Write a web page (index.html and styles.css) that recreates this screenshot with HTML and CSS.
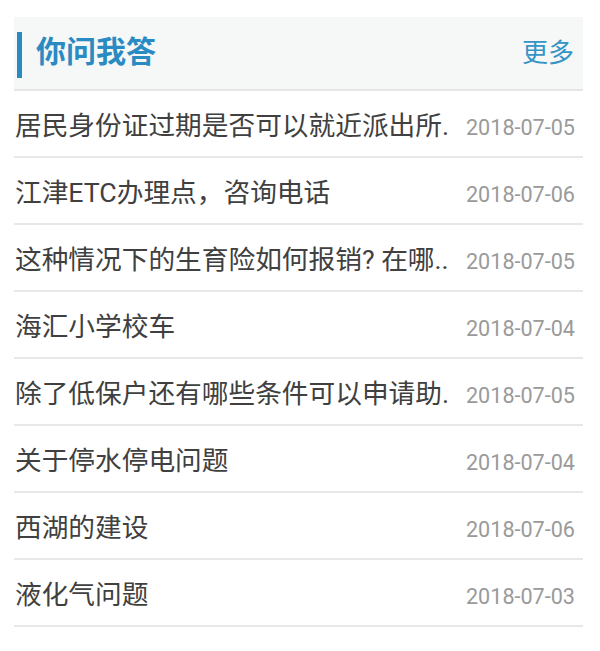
FILE: index.html
```html
<!DOCTYPE html>
<html lang="zh-CN">
<head>
<meta charset="utf-8">
<title>你问我答</title>
<link rel="stylesheet" href="styles.css">
</head>
<body>
<section class="panel">
  <header class="panel-head">
    <h2 class="panel-title"><span class="title-text">你问我答</span></h2>
    <a class="more" href="#">更多</a>
  </header>
  <ul class="list">
    <li class="item"><span class="q">居民身份证过期是否可以就近派出所.</span><span class="date">2018-07-05</span></li>
    <li class="item"><span class="q">江津ETC办理点，咨询电话</span><span class="date">2018-07-06</span></li>
    <li class="item"><span class="q">这种情况下的生育险如何报销? 在哪..</span><span class="date">2018-07-05</span></li>
    <li class="item"><span class="q">海汇小学校车</span><span class="date">2018-07-04</span></li>
    <li class="item"><span class="q">除了低保户还有哪些条件可以申请助.</span><span class="date">2018-07-05</span></li>
    <li class="item"><span class="q">关于停水停电问题</span><span class="date">2018-07-04</span></li>
    <li class="item"><span class="q">西湖的建设</span><span class="date">2018-07-06</span></li>
    <li class="item"><span class="q">液化气问题</span><span class="date">2018-07-03</span></li>
  </ul>
</section>
</body>
</html>
```
FILE: styles.css
```css
html, body {
  margin: 0;
  padding: 0;
  background: #ffffff;
}
body {
  padding: 17px 17px 0 14px;
  font-family: Roboto, "Noto Sans CJK SC", sans-serif;
}
.panel {
  width: 569px;
}
.panel-head {
  display: flex;
  align-items: center;
  justify-content: space-between;
  height: 72px;
  background: #f6f7f7;
  border-bottom: 2px solid #e6e6e6;
  padding: 0 9px 0 3px;
}
.panel-title {
  margin: 0;
  display: flex;
  align-items: center;
  font-size: 30px;
  font-weight: 700;
  color: #2a8bc2;
  line-height: 1;
}
.panel-title::before {
  content: "";
  display: block;
  width: 5px;
  height: 46px;
  background: #2a8bc2;
  margin-right: 14px;
  margin-top: 3px;
}
.title-text {
  padding-bottom: 3px;
}
.more {
  font-size: 26px;
  color: #3594c6;
  text-decoration: none;
  line-height: 1;
}
.list {
  list-style: none;
  margin: 0;
  padding: 0;
}
.item {
  display: flex;
  align-items: center;
  height: 65px;
  border-bottom: 2px solid #e8e8e8;
  padding: 0 8px 0 1px;
}
.q {
  flex: 1;
  min-width: 0;
  white-space: nowrap;
  overflow: hidden;
  font-size: 26.7px;
  color: #404040;
}
.date {
  flex: none;
  margin-left: 10px;
  font-size: 21.6px;
  color: #9a9a9a;
  padding-top: 7px;
}
```
